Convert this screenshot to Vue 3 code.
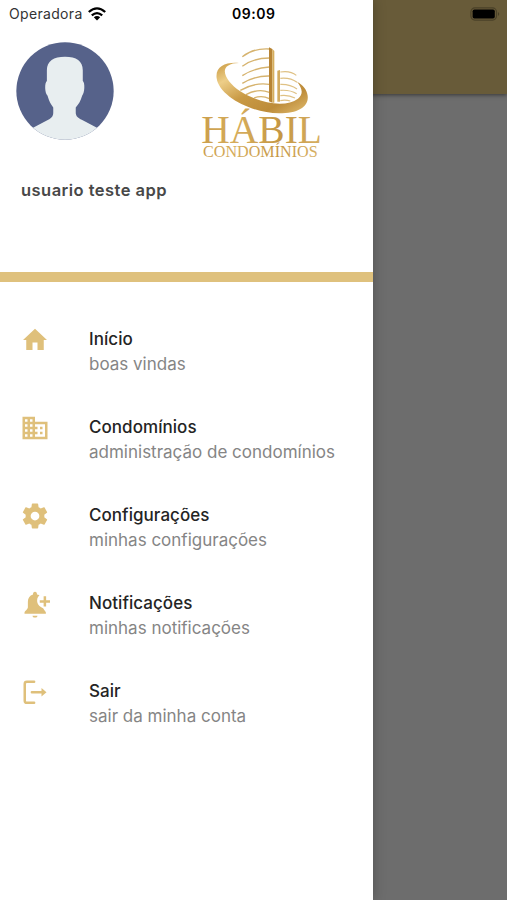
<template>
  <div class="screen">
    <div class="page">
      <header class="toolbar"></header>
    </div>

    <aside class="drawer">
      <div class="profile">
        <div class="images">
          <svg class="avatar" viewBox="0 0 292 292">
            <defs>
              <clipPath id="round"><circle cx="146" cy="146" r="145" /></clipPath>
            </defs>
            <g clip-path="url(#round)">
              <rect width="292" height="292" fill="#56628a" />
              <path
                fill="#e8eef0"
                d="M92 116 V84 C92 57 112 44 146 44 C180 44 199 57 199 84 V116 C206 121 205 151 197 160 C193 175 186 186 178 195 V210 C178 222 186 227 196 232 L244 257 V292 H48 V257 L96 232 C105 227 111 222 111 210 V195 C104 186 98 175 94 160 C85 151 85 121 92 116 Z"
              />
            </g>
          </svg>

          <svg class="logo" viewBox="0 0 450 420">
            <defs>
              <linearGradient id="gold" x1="0" y1="0" x2="1" y2="1">
                <stop offset="0" stop-color="#c8983f" />
                <stop offset="0.22" stop-color="#edce88" />
                <stop offset="0.48" stop-color="#c99a45" />
                <stop offset="0.75" stop-color="#bd8c3a" />
                <stop offset="1" stop-color="#e2bd70" />
              </linearGradient>
              <linearGradient id="letters" x1="0" y1="0" x2="1" y2="0">
                <stop offset="0" stop-color="#cb9e4c" />
                <stop offset="0.3" stop-color="#d6ad5c" />
                <stop offset="0.65" stop-color="#c59744" />
                <stop offset="1" stop-color="#d7b064" />
              </linearGradient>
            </defs>
            <g fill="none" stroke="#d6b36e" stroke-width="4">
              <path d="M157 80 Q190 54 238 57" />
              <path d="M157 109 Q190 84 238 84" />
              <path d="M157 137 Q190 115 238 111" />
              <path d="M157 160 Q195 137 238 138" />
              <path d="M151 181 Q195 156 238 163" />
              <path d="M168 194 Q205 174 238 187" />
              <path d="M192 204 Q216 195 238 206" />
            </g>
            <g fill="none" stroke="#dfc184" stroke-width="3.5">
              <path d="M271 126 Q301 121 319 136" />
              <path d="M271 145 Q301 142 321 157" />
              <path d="M271 163 Q301 162 321 177" />
              <path d="M271 181 Q301 179 320 191" />
              <path d="M271 197 Q295 194 315 204" />
              <path d="M271 212 Q285 208 301 213" />
            </g>
            <path fill="#b78435" d="M237 52 L247 57 V218 L237 214 Z" />
            <path fill="#d6ae5d" d="M247 57 L253 63 V218 H247 Z" />
            <path fill="#d3ac60" d="M262 122 L270 120 V215 H262 Z" />
            <path
              fill="url(#gold)"
              d="M147 99 C108 95 75 109 80 145 C87 197 181 249 267 250 C326 250 357 229 353 197 C351 179 339 165 321 155 C336 173 342 192 324 206 C286 235 205 219 151 184 C112 159 91 121 114 107 C123 101 134 99 147 99 Z"
            />
            <text x="34" y="339" font-size="118" textLength="362" lengthAdjust="spacingAndGlyphs" fill="url(#letters)">HÁBIL</text>
            <text x="39" y="382" font-size="49" textLength="344" lengthAdjust="spacingAndGlyphs" fill="url(#letters)">CONDOMÍNIOS</text>
          </svg>
        </div>
        <p class="user">usuario teste app</p>
      </div>

      <nav class="menu">
        <a v-for="item in items" :key="item.title" class="item">
          <svg class="icon" viewBox="0 0 24 24">
            <path v-if="item.fill" :d="item.fill" fill="currentColor" />
            <path v-if="item.line" :d="item.line" class="line" />
          </svg>
          <div class="text">
            <span class="title">{{ item.title }}</span>
            <span class="subtitle">{{ item.subtitle }}</span>
          </div>
        </a>
      </nav>
    </aside>

    <div class="status">
      <span class="carrier">Operadora</span>
      <svg class="wifi" viewBox="0 0 18 14">
        <g fill="none" stroke="#000" stroke-width="2.3">
          <path d="M0.8 5 Q9 -2.3 17.2 5" />
          <path d="M3.8 8.4 Q9 3.8 14.2 8.4" />
        </g>
        <path d="M5.8 10.3 Q9 7.8 12.2 10.3 L9 13.6 Z" />
      </svg>
      <span class="time">09:09</span>
      <svg class="battery" viewBox="0 0 31 14">
        <rect x="0.9" y="0.9" width="25.6" height="12.2" rx="4" fill="none" stroke="#4a4128" stroke-width="1.2" />
        <rect x="2.6" y="2.5" width="22.2" height="9" rx="1.8" />
        <path d="M28 5 Q30.5 7 28 9 Z" fill="#4a4128" />
      </svg>
    </div>
  </div>
</template>

<script setup>
const items = [
  {
    title: 'Início',
    subtitle: 'boas vindas',
    fill: 'M10 20v-6h4v6h5v-8h2.6L12 3 2.4 12H5v8z',
  },
  {
    title: 'Condomínios',
    subtitle: 'administração de condomínios',
    fill: 'M12 7V3H2v18h20V7H12zM6 19H4v-2h2v2zm0-4H4v-2h2v2zm0-4H4V9h2v2zm0-4H4V5h2v2zm4 12H8v-2h2v2zm0-4H8v-2h2v2zm0-4H8V9h2v2zm0-4H8V5h2v2zm10 12h-8v-2h2v-2h-2v-2h2v-2h-2V9h8v10zm-2-8h-2v2h2v-2zm0 4h-2v2h2v-2z',
  },
  {
    title: 'Configurações',
    subtitle: 'minhas configurações',
    fill: 'M12 15.5A3.5 3.5 0 0 1 8.5 12 3.5 3.5 0 0 1 12 8.5a3.5 3.5 0 0 1 3.5 3.5 3.5 3.5 0 0 1-3.5 3.5m7.43-2.53c.04-.32.07-.64.07-.97s-.03-.66-.07-1l2.11-1.63c.19-.15.24-.42.12-.64l-2-3.46c-.12-.22-.39-.31-.61-.22l-2.49 1c-.52-.39-1.06-.73-1.69-.98l-.37-2.65A.506.506 0 0 0 14 2h-4c-.25 0-.46.18-.5.42l-.37 2.65c-.63.25-1.17.59-1.69.98l-2.49-1c-.22-.09-.49 0-.61.22l-2 3.46c-.13.22-.07.49.12.64L4.57 11c-.04.34-.07.67-.07 1s.03.65.07.97l-2.11 1.66c-.19.15-.25.42-.12.64l2 3.46c.12.22.39.3.61.22l2.49-1.01c.52.4 1.06.74 1.69.99l.37 2.65c.04.24.25.42.5.42h4c.25 0 .46-.18.5-.42l.37-2.65c.63-.26 1.17-.59 1.69-.99l2.49 1.01c.22.08.49 0 .61-.22l2-3.46c.12-.22.07-.49-.12-.64z',
  },
  {
    title: 'Notificações',
    subtitle: 'minhas notificações',
    fill: 'M10 21.3h4c0 1-.9 1.5-2 1.5s-2-.5-2-1.5zM13.6 4.4C13.6 2.9 13.1 2.2 12 2.2S10.4 2.9 10.4 4.4C7.7 5.2 6.3 7.5 6.3 10.2V14.8C6.3 16.3 3.6 17.6 3.6 18.8V19.8H20.7V18.8C20.7 17.7 19.2 16.9 18.5 15.3C15.3 14.3 13.7 11.8 13.7 9.2C13.7 7.3 14.5 6 15.6 5.2C15 4.8 14.3 4.5 13.6 4.4zM18.9 5.8h2v3.100h3.100v2h-3.100v3.100h-2v-3.100h-3.100v-2h3.100z',
  },
  {
    title: 'Sair',
    subtitle: 'sair da minha conta',
    line: 'M11.3 3.800H5.500Q3.800 3.800 3.800 5.500V18.900Q3.800 20.600 5.500 20.600H11.300M9.500 12.200H18.500',
    fill: 'M17.2 8.800L21.200 12.200L17.200 15.600Z',
  },
]
</script>

<style>
body {
  margin: 0;
}
</style>

<style scoped>
.screen {
  position: relative;
  width: 507px;
  height: 900px;
  overflow: hidden;
  background: #6d6d6d;
  font-family: Inter, Roboto, sans-serif;
}

.toolbar {
  height: 94px;
  background: #685b39;
  box-shadow: 0 1px 4px rgba(0, 0, 0, 0.5);
}

.drawer {
  position: absolute;
  top: 0;
  left: 0;
  width: 372.5px;
  height: 900px;
  background: #fff;
  box-shadow: 0 0 12px rgba(0, 0, 0, 0.25);
}

.profile {
  box-sizing: border-box;
  height: 282px;
  padding: 30px 33px 0 16px;
  border-bottom: 10px solid #dfc17d;
}

.images {
  display: flex;
  justify-content: space-between;
  height: 140px;
}

.avatar {
  width: 98px;
  height: 98px;
  margin-top: 12px;
}

.logo {
  width: 150px;
  height: 140px;
  font-family: "Liberation Serif", serif;
}

.user {
  margin: 9px 0 0 5px;
  font-size: 16.5px;
  line-height: 22px;
  font-weight: 600;
  letter-spacing: 0.46px;
  color: #484848;
  white-space: nowrap;
}

.menu {
  padding-top: 25px;
}

.item {
  display: flex;
  align-items: center;
  height: 88px;
}

.icon {
  flex: none;
  width: 30px;
  height: 30px;
  margin: -22px 39px 0 20px;
  color: #dfc07b;
}

.line {
  fill: none;
  stroke: currentColor;
  stroke-width: 2;
  stroke-linecap: round;
}

.text {
  display: flex;
  flex-direction: column;
  padding-top: 1px;
  line-height: 24.5px;
  white-space: nowrap;
}

.title {
  font-size: 17px;
  font-weight: 500;
  letter-spacing: 0.05px;
  color: #242424;
}

.subtitle {
  font-size: 17px;
  color: #858585;
}

.status {
  position: absolute;
  top: 0;
  left: 0;
  display: grid;
  grid-template-columns: 79px 144px 1fr auto;
  align-items: center;
  box-sizing: border-box;
  width: 507px;
  height: 27px;
  padding: 0 6px 0 9px;
  font-size: 14px;
}

.carrier {
  letter-spacing: 0.33px;
  color: #333;
}

.wifi {
  width: 18px;
  height: 14px;
}

.time {
  font-weight: 600;
  letter-spacing: 0.5px;
}

.battery {
  width: 31px;
  height: 14px;
}
</style>
